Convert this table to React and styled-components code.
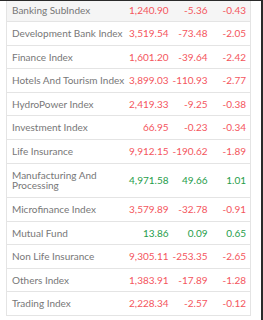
import React from 'react'
import styled, { createGlobalStyle } from 'styled-components'

const GlobalStyle = createGlobalStyle`
    html, body {
        margin: 0;
        padding: 0;
        background: #ffffff;
    }
`

const rows = [
    { name: 'Banking SubIndex', value: '1,240.90', change: '-5.36', pct: '-0.43' },
    { name: 'Development Bank Index', value: '3,519.54', change: '-73.48', pct: '-2.05' },
    { name: 'Finance Index', value: '1,601.20', change: '-39.64', pct: '-2.42' },
    { name: 'Hotels And Tourism Index', value: '3,899.03', change: '-110.93', pct: '-2.77' },
    { name: 'HydroPower Index', value: '2,419.33', change: '-9.25', pct: '-0.38' },
    { name: 'Investment Index', value: '66.95', change: '-0.23', pct: '-0.34' },
    { name: 'Life Insurance', value: '9,912.15', change: '-190.62', pct: '-1.89' },
    { name: 'Manufacturing And Processing', value: '4,971.58', change: '49.66', pct: '1.01' },
    { name: 'Microfinance Index', value: '3,579.89', change: '-32.78', pct: '-0.91' },
    { name: 'Mutual Fund', value: '13.86', change: '0.09', pct: '0.65' },
    { name: 'Non Life Insurance', value: '9,305.11', change: '-253.35', pct: '-2.65' },
    { name: 'Others Index', value: '1,383.91', change: '-17.89', pct: '-1.28' },
    { name: 'Trading Index', value: '2,228.34', change: '-2.57', pct: '-0.12' },
]

const App = () => {
    return (
        <>
            <GlobalStyle />
            <Frame>
                <IndexTable>
                    <colgroup>
                        <Col w={121} />
                        <Col w={45} />
                        <Col w={39} />
                        <Col w={39} />
                    </colgroup>
                    <tbody>
                        {rows.map((row, i) => {
                            const up = !row.change.startsWith('-')
                            return (
                                <Row key={row.name} shaded={i === 0}>
                                    <NameCell>{row.name}</NameCell>
                                    <NumCell up={up}>{row.value}</NumCell>
                                    <NumCell up={up}>{row.change}</NumCell>
                                    <NumCell up={up}>{row.pct}</NumCell>
                                </Row>
                            )
                        })}
                    </tbody>
                </IndexTable>
            </Frame>
        </>
    )
}

export default App

const Frame = styled.div`
    box-sizing: border-box;
    width: 263px;
    height: 320px;
    border-top: 1px solid #2a2a2a;
    border-right: 2px solid #2a2a2a;
    overflow: hidden;
    padding-left: 6px;
    font-family: 'Lato', 'Noto Sans', sans-serif;
`

const IndexTable = styled.table`
    margin-top: -3.5px;
    width: 245px;
    table-layout: fixed;
    border-collapse: collapse;
    border: 1px solid #e4e4e4;
    background: #ffffff;
`

const Col = styled.col`
    width: ${(props) => props.w}px;
`

const Row = styled.tr`
    background: ${(props) => (props.shaded ? '#f5f5f5' : '#ffffff')};
    border-bottom: 1px solid #e4e4e4;
`

const NameCell = styled.td`
    padding: 6px 2px 5.9px 5px;
    font-size: 10px;
    line-height: 10.7px;
    color: #777777;
    vertical-align: middle;
`

const NumCell = styled.td`
    padding: 6px 4px 5.9px 0;
    font-size: 10px;
    line-height: 10.7px;
    text-align: right;
    white-space: nowrap;
    vertical-align: middle;
    color: ${(props) => (props.up ? '#1f9d4b' : '#f4555d')};
`
